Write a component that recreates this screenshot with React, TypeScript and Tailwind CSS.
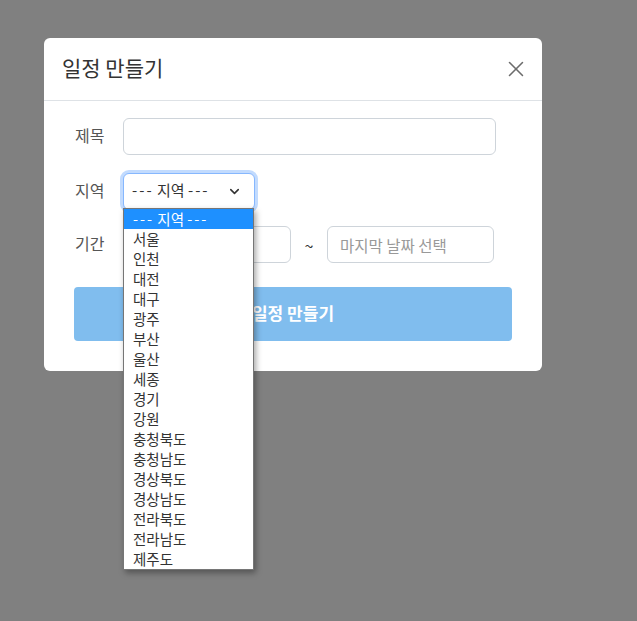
import { X, ChevronDown } from 'lucide-react'

const REGIONS = [
  '--- 지역 ---',
  '서울',
  '인천',
  '대전',
  '대구',
  '광주',
  '부산',
  '울산',
  '세종',
  '경기',
  '강원',
  '충청북도',
  '충청남도',
  '경상북도',
  '경상남도',
  '전라북도',
  '전라남도',
  '제주도',
]

const font = "font-['Noto_Sans_CJK_KR','Noto_Sans',sans-serif]"

// the native option text uses wider dashes than Noto gives us
function Placeholder() {
  return (
    <>
      <span className="tracking-[2px]">---</span> 지역 <span className="tracking-[2px]">---</span>
    </>
  )
}

export default function App() {
  return (
    <div className={`h-[621px] w-[637px] bg-[#808080] pl-[44px] pt-[38px] ${font}`}>
      <div className="w-[498px] rounded-md bg-white">
        <div className="flex h-[63px] items-center justify-between border-b border-[#dee2e6] pl-[18px] pr-[13px]">
          <h2 className="-mt-[3px] text-[21px] leading-none text-[#333]">일정 만들기</h2>
          <X className="h-[26px] w-[26px] text-[#6c6c6c]" strokeWidth={1.4} />
        </div>

        <div className="px-[30px] pb-[30px] pt-[17px]">
          <div className="flex items-center">
            <label className="-mt-[3px] w-[49px] pl-[1px] text-[16px] text-[#555]">제목</label>
            <input className="h-[37px] w-[373px] rounded-md border border-[#ced4da] bg-white px-3 outline-none" />
          </div>

          <div className="mt-[18px] flex items-center">
            <label className="-mt-[3px] w-[49px] pl-[1px] text-[16px] text-[#555]">지역</label>
            <div className="relative">
              <div className="flex h-[37px] w-[132px] items-center justify-between rounded-md border border-[#86b7fe] bg-white pl-[8px] pr-[12px] text-[15px] text-[#333] shadow-[0_0_0_3px_#c2dbfe]">
                <span className="-mt-[2px]">
                  <Placeholder />
                </span>
                <ChevronDown className="h-[15px] w-[15px] text-[#333]" strokeWidth={2.5} />
              </div>
              <ul className="absolute left-0 top-[35px] z-10 w-[131px] border border-[#767676] bg-white shadow-[2px_3px_6px_rgba(0,0,0,0.35)]">
                {REGIONS.map((r, i) => (
                  <li
                    key={r}
                    className={`h-[20px] pl-[9px] text-[14.5px] leading-[19px] ${
                      i === 0 ? 'bg-[#1e90ff] text-white' : 'text-[#333]'
                    }`}
                  >
                    {i === 0 ? <Placeholder /> : r}
                  </li>
                ))}
              </ul>
            </div>
          </div>

          <div className="mt-[16px] flex items-center">
            <label className="-mt-[3px] w-[49px] pl-[1px] text-[16px] text-[#555]">기간</label>
            <input className="h-[37px] w-[168px] rounded-md border border-[#ced4da] bg-white px-3 outline-none" />
            <span className="w-[36px] text-center text-[16px] text-[#333]">~</span>
            <input
              placeholder="마지막 날짜 선택"
              className="h-[37px] w-[167px] rounded-md border border-[#ced4da] bg-white px-3 text-[15.5px] outline-none placeholder:text-[#999]"
            />
          </div>

          <button
            type="button"
            className="mt-[24px] h-[54px] w-full rounded-[4px] bg-[#80bdee] pb-[3px] text-[17px] font-bold text-white"
          >
            일정 만들기
          </button>
        </div>
      </div>
    </div>
  )
}
